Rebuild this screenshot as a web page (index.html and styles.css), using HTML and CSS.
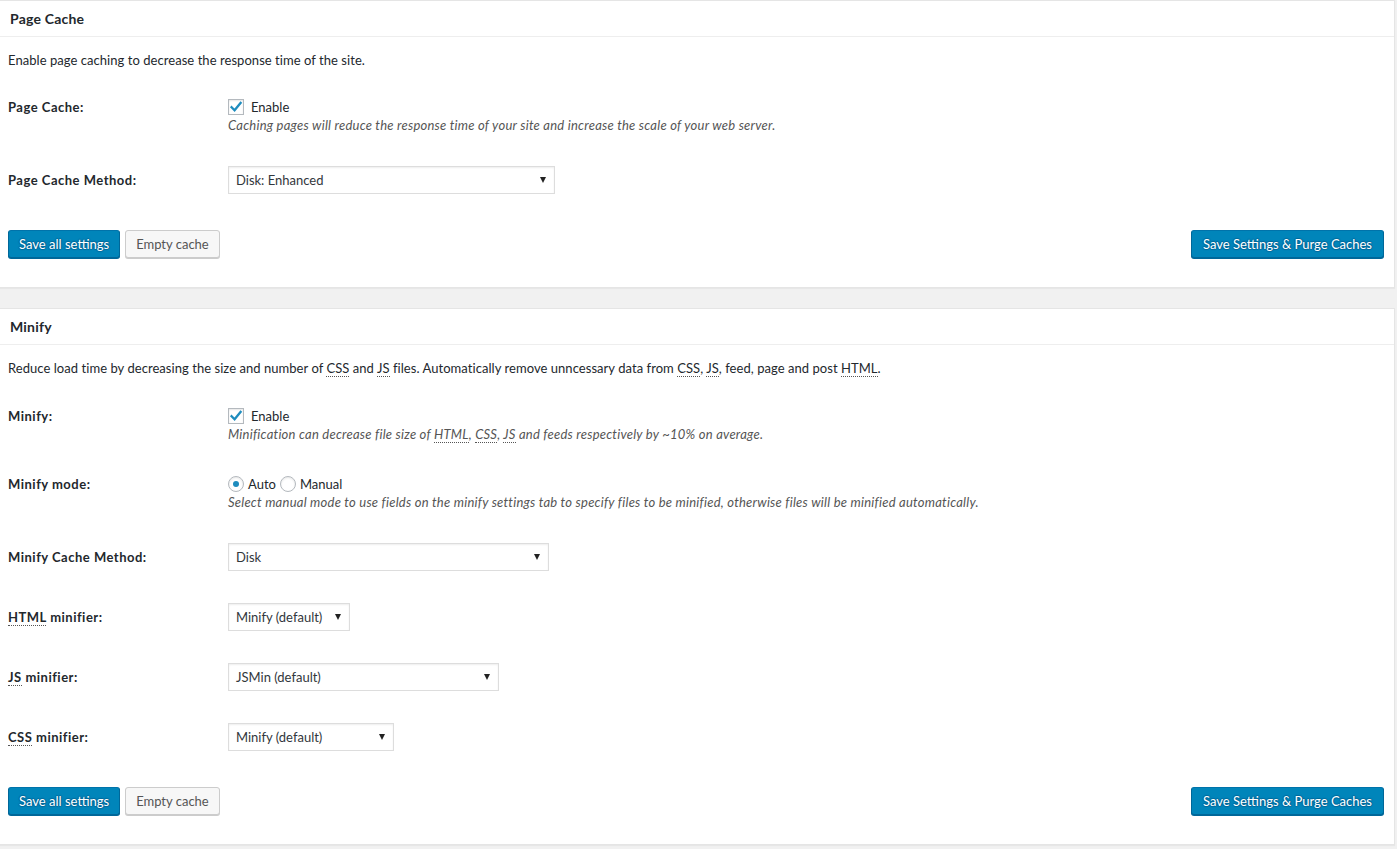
FILE: index.html
```html
<!DOCTYPE html>
<html lang="en">
<head>
<meta charset="utf-8">
<title>Page Cache &amp; Minify</title>
<link rel="stylesheet" href="styles.css">
</head>
<body>
<div class="panel">
  <h3 class="panel-title">Page Cache</h3>
  <div class="panel-body">
    <p class="intro">Enable page caching to decrease the response time of the site.</p>
    <div class="row">
      <div class="label label-line">Page Cache:</div>
      <div class="field">
        <label class="check-line"><span class="checkbox"><svg viewBox="0 0 16 16" width="16" height="16"><path d="M3.6 8.2 L6.6 11.2 L12.6 3.8" fill="none" stroke="#1e8cbe" stroke-width="2.3" stroke-linecap="square"/></svg></span>Enable</label>
        <p class="note">Caching pages will reduce the response time of your site and increase the scale of your web server.</p>
      </div>
    </div>
    <div class="row row-select">
      <div class="label">Page Cache Method:</div>
      <div class="field"><div class="select w-pc">Disk: Enhanced<span class="arrow"></span></div></div>
    </div>
    <div class="actions">
      <button class="btn btn-primary">Save all settings</button>
      <button class="btn btn-secondary">Empty cache</button>
      <button class="btn btn-primary btn-right">Save Settings &amp; Purge Caches</button>
    </div>
  </div>
</div>

<div class="panel">
  <h3 class="panel-title">Minify</h3>
  <div class="panel-body">
    <p class="intro intro-2">Reduce load time by decreasing the size and number of <abbr>CSS</abbr> and <abbr>JS</abbr> files. Automatically remove unncessary data from <abbr>CSS</abbr>, <abbr>JS</abbr>, feed, page and post <abbr>HTML</abbr>.</p>
    <div class="row">
      <div class="label label-line">Minify:</div>
      <div class="field">
        <label class="check-line"><span class="checkbox"><svg viewBox="0 0 16 16" width="16" height="16"><path d="M3.6 8.2 L6.6 11.2 L12.6 3.8" fill="none" stroke="#1e8cbe" stroke-width="2.3" stroke-linecap="square"/></svg></span>Enable</label>
        <p class="note">Minification can decrease file size of <abbr>HTML</abbr>, <abbr>CSS</abbr>, <abbr>JS</abbr> and feeds respectively by ~10% on average.</p>
      </div>
    </div>
    <div class="row">
      <div class="label label-line">Minify mode:</div>
      <div class="field">
        <div class="radio-line">
          <label class="radio-opt"><span class="radio checked"></span>Auto</label>
          <label class="radio-opt"><span class="radio"></span>Manual</label>
        </div>
        <p class="note">Select manual mode to use fields on the minify settings tab to specify files to be minified, otherwise files will be minified automatically.</p>
      </div>
    </div>
    <div class="row row-select">
      <div class="label">Minify Cache Method:</div>
      <div class="field"><div class="select w-mc">Disk<span class="arrow"></span></div></div>
    </div>
    <div class="row row-select">
      <div class="label"><abbr>HTML</abbr> minifier:</div>
      <div class="field"><div class="select w-html">Minify (default)<span class="arrow"></span></div></div>
    </div>
    <div class="row row-select">
      <div class="label"><abbr>JS</abbr> minifier:</div>
      <div class="field"><div class="select w-js">JSMin (default)<span class="arrow"></span></div></div>
    </div>
    <div class="row row-select">
      <div class="label"><abbr>CSS</abbr> minifier:</div>
      <div class="field"><div class="select w-css">Minify (default)<span class="arrow"></span></div></div>
    </div>
    <div class="actions">
      <button class="btn btn-primary">Save all settings</button>
      <button class="btn btn-secondary">Empty cache</button>
      <button class="btn btn-primary btn-right">Save Settings &amp; Purge Caches</button>
    </div>
  </div>
</div>
</body>
</html>
```

FILE: styles.css
```css
* { box-sizing: border-box; }

html, body {
  margin: 0;
  padding: 0;
  background: #f1f1f1;
}

body {
  font-family: Lato, "Liberation Sans", sans-serif;
  font-size: 13px;
  color: #23282d;
}

.panel {
  background: #fff;
  border: 1px solid #e5e5e5;
  box-shadow: 0 1px 1px rgba(0, 0, 0, 0.04);
  margin: 0 2px 20px -1px;
}

.panel-title {
  margin: 0;
  height: 36px;
  line-height: 35px;
  padding: 0 0 0 10px;
  font-size: 14px;
  font-weight: 700;
  letter-spacing: 0.2px;
  border-bottom: 1px solid #eee;
  color: #23282d;
}

.panel-body {
  padding: 0 10px 29px 8px;
}

.intro {
  margin: 14px 0 29px;
  line-height: 18px;
  letter-spacing: 0.05px;
}

.intro-2 {
  margin-top: 14px;
  margin-bottom: 30px;
}

.row {
  display: flex;
  align-items: flex-start;
  margin-bottom: 32px;
}

.row-select {
  align-items: center;
}

.label {
  width: 220px;
  flex: none;
  font-weight: 700;
  line-height: 18px;
  letter-spacing: 0.5px;
}

.field {
  flex: 1;
  line-height: 18px;
}

.check-line {
  display: flex;
  align-items: center;
  height: 18px;
}

.checkbox {
  width: 16px;
  height: 16px;
  border: 1px solid #b4b9be;
  background: #fff;
  box-shadow: inset 0 1px 2px rgba(0, 0, 0, 0.1);
  margin-right: 7px;
  display: flex;
  align-items: center;
  justify-content: center;
  flex: none;
}

.checkbox svg {
  display: block;
  margin: -1px;
}

.note {
  margin: 0;
  font-style: italic;
  color: #555;
  line-height: 18px;
  letter-spacing: 0.24px;
}

.radio-line {
  display: flex;
  align-items: center;
  height: 18px;
}

.radio-opt {
  display: flex;
  align-items: center;
  margin-right: 4px;
}

.radio {
  width: 16px;
  height: 16px;
  border: 1px solid #b4b9be;
  border-radius: 50%;
  background: #fff;
  box-shadow: inset 0 1px 2px rgba(0, 0, 0, 0.1);
  margin-right: 4px;
  display: flex;
  align-items: center;
  justify-content: center;
  flex: none;
}

.radio.checked::after {
  content: "";
  width: 6px;
  height: 6px;
  border-radius: 50%;
  background: #1e8cbe;
}

.select {
  position: relative;
  height: 28px;
  border: 1px solid #ddd;
  box-shadow: inset 0 1px 2px rgba(0, 0, 0, 0.07);
  background: #fff;
  line-height: 26px;
  padding-left: 7px;
  color: #32373c;
}

.arrow {
  position: absolute;
  right: 8px;
  top: 10px;
  width: 0;
  height: 0;
  border-left: 3px solid transparent;
  border-right: 3px solid transparent;
  border-top: 6px solid #222;
}

.w-pc { width: 327px; }
.w-mc { width: 321px; }
.w-html { width: 122px; }
.w-js { width: 271px; }
.w-css { width: 166px; }

abbr {
  text-decoration: none;
  border-bottom: 1px dotted #555;
}

.actions {
  display: flex;
  align-items: center;
  gap: 5px;
  margin-top: 36px;
}

.btn {
  font-family: inherit;
  font-size: 13px;
  height: 28px;
  line-height: 26px;
  padding: 0 10px 1px;
  border-radius: 3px;
  border: 1px solid;
  cursor: pointer;
  white-space: nowrap;
}

.btn-primary {
  background: #0085ba;
  border-color: #0073aa #006799 #006799;
  box-shadow: 0 1px 0 #006799;
  color: #fff;
  text-shadow: 0 -1px 1px #006799, 1px 0 1px #006799, 0 1px 1px #006799, -1px 0 1px #006799;
}

.btn-secondary {
  background: #f7f7f7;
  border-color: #ccc;
  box-shadow: 0 1px 0 #ccc;
  color: #555;
}

.btn-right {
  margin-left: auto;
  padding: 0 11px 1px;
}
```
